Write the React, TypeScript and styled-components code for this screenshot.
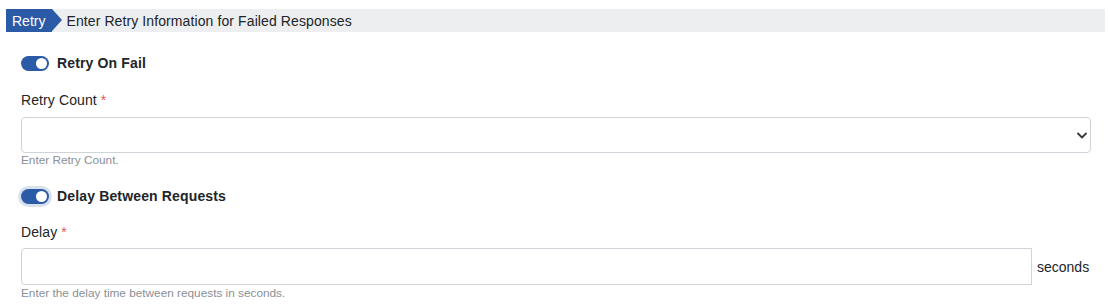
import React from "react";
import styled, { createGlobalStyle } from "styled-components";

const Global = createGlobalStyle`
  html, body { margin: 0; padding: 0; background: #fff; }
  body { font-family: "Liberation Sans", Arial, sans-serif; color: #212529; }
  * { box-sizing: border-box; }
`;

const Page = styled.div`
  padding: 9px 5px 0 6px;
`;

const Header = styled.div`
  display: flex;
  align-items: center;
  height: 23px;
  background: #eceef0;
`;

const Tag = styled.div`
  position: relative;
  height: 23px;
  display: flex;
  align-items: center;
  padding: 0 7px 0 6px;
  background: #2b5aa6;
  color: #fff;
  font-size: 14px;
  margin-right: 14px;
  &::after {
    content: "";
    position: absolute;
    right: -10px;
    top: 0;
    border-top: 11.5px solid transparent;
    border-bottom: 11.5px solid transparent;
    border-left: 10px solid #2b5aa6;
  }
`;

const HeaderText = styled.div`
  font-size: 14px;
  letter-spacing: 0.1px;
  color: #212529;
`;

const Form = styled.div`
  padding: 0 14px 0 15px;
`;

const SwitchRow = styled.label<{ $top: number }>`
  display: flex;
  align-items: center;
  gap: 8px;
  margin-top: ${(p) => p.$top}px;
  font-size: 14px;
  font-weight: 700;
  letter-spacing: 0.15px;
  height: 18px;
`;

const Switch = styled.span<{ $focus?: boolean }>`
  position: relative;
  width: 28px;
  height: 15px;
  border-radius: 8px;
  background: #2b5aa6;
  box-shadow: ${(p) => (p.$focus ? "0 0 0 3px rgba(43, 90, 166, 0.18)" : "none")};
  &::after {
    content: "";
    position: absolute;
    right: 2px;
    top: 2px;
    width: 11px;
    height: 11px;
    border-radius: 50%;
    background: #fff;
  }
`;

const Label = styled.div<{ $top: number }>`
  margin-top: ${(p) => p.$top}px;
  font-size: 14px;
  line-height: 18px;
  letter-spacing: 0.1px;
  color: #212529;
`;

const Star = styled.span`
  color: #e05a5a;
  margin-left: 4px;
`;

const SelectBox = styled.div`
  margin-top: 8px;
  height: 36px;
  border: 1px solid #ced4da;
  border-radius: 4px;
  display: flex;
  align-items: center;
  justify-content: flex-end;
  padding-right: 3px;
  color: #343a40;
`;

const Help = styled.div<{ $top: number }>`
  margin-top: ${(p) => p.$top}px;
  font-size: 11.8px;
  line-height: 14px;
  color: #8a9096;
`;

const InputGroup = styled.div`
  margin-top: 7px;
  display: flex;
  align-items: center;
`;

const Input = styled.div`
  flex: 1;
  height: 37px;
  border: 1px solid #ced4da;
  border-radius: 4px 0 0 4px;
`;

const Addon = styled.div`
  font-size: 14px;
  padding: 0 0 0 5px;
  width: 59px;
  color: #212529;
`;

export default function App() {
  return (
    <>
      <Global />
      <Page>
        <Header>
          <Tag>Retry</Tag>
          <HeaderText>Enter Retry Information for Failed Responses</HeaderText>
        </Header>
        <Form>
          <SwitchRow $top={22}>
            <Switch />
            Retry On Fail
          </SwitchRow>
          <Label $top={19}>
            Retry Count<Star>*</Star>
          </Label>
          <SelectBox>
            <svg width="10" height="7" viewBox="0 0 10 7">
              <path d="M1 1.5l4 4 4-4" fill="none" stroke="#343a40" strokeWidth="1.8" strokeLinecap="round" strokeLinejoin="round" />
            </svg>
          </SelectBox>
          <Help $top={0}>Enter Retry Count.</Help>
          <SwitchRow $top={20}>
            <Switch $focus />
            Delay Between Requests
          </SwitchRow>
          <Label $top={18}>
            Delay<Star>*</Star>
          </Label>
          <InputGroup>
            <Input />
            <Addon>seconds</Addon>
          </InputGroup>
          <Help $top={1}>Enter the delay time between requests in seconds.</Help>
        </Form>
      </Page>
    </>
  );
}
